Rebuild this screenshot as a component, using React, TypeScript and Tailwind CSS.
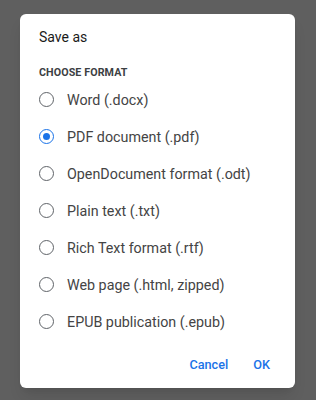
import { useState } from "react";

const formats = [
  "Word (.docx)",
  "PDF document (.pdf)",
  "OpenDocument format (.odt)",
  "Plain text (.txt)",
  "Rich Text format (.rtf)",
  "Web page (.html, zipped)",
  "EPUB publication (.epub)",
];

export default function App() {
  const [selected, setSelected] = useState(1);

  return (
    <div
      className="min-h-[400px] w-[316px] bg-[#5f5f5f] pt-[14px] pl-[20px]"
      style={{ fontFamily: "Roboto, 'Liberation Sans', sans-serif" }}
    >
      <div className="w-[275px] h-[374px] bg-white rounded-[6px] shadow-lg flex flex-col">
        {/* Title */}
        <div className="pt-[13px] pl-[19px] text-[14px] leading-[20px] text-[#1a1a1a]">
          Save as
        </div>
        <div className="mt-[18px] pl-[19px] text-[10.7px] leading-[16px] font-bold text-[#3c4043] tracking-[0.1px]">
          CHOOSE FORMAT
        </div>

        {/* Options */}
        <div className="flex flex-col">
          {formats.map((label, i) => (
            <button
              key={label}
              onClick={() => setSelected(i)}
              className="h-[37px] flex items-center pl-[19px] text-left"
            >
              <span
                className={`w-[15px] h-[15px] rounded-full border-[1.5px] flex items-center justify-center shrink-0 ${
                  selected === i ? "border-[#1a73e8]" : "border-[#5f6368]"
                }`}
              >
                {selected === i && (
                  <span className="w-[7px] h-[7px] rounded-full bg-[#1a73e8]" />
                )}
              </span>
              <span className="ml-[13px] text-[14.3px] leading-[20px] text-[#444444]">
                {label}
              </span>
            </button>
          ))}
        </div>

        {/* Actions */}
        <div className="mt-[7px] h-[36px] flex items-center justify-end pr-[25px] gap-[25px] text-[12.7px] font-medium text-[#1a73e8]">
          <button>Cancel</button>
          <button>OK</button>
        </div>
      </div>
    </div>
  );
}
